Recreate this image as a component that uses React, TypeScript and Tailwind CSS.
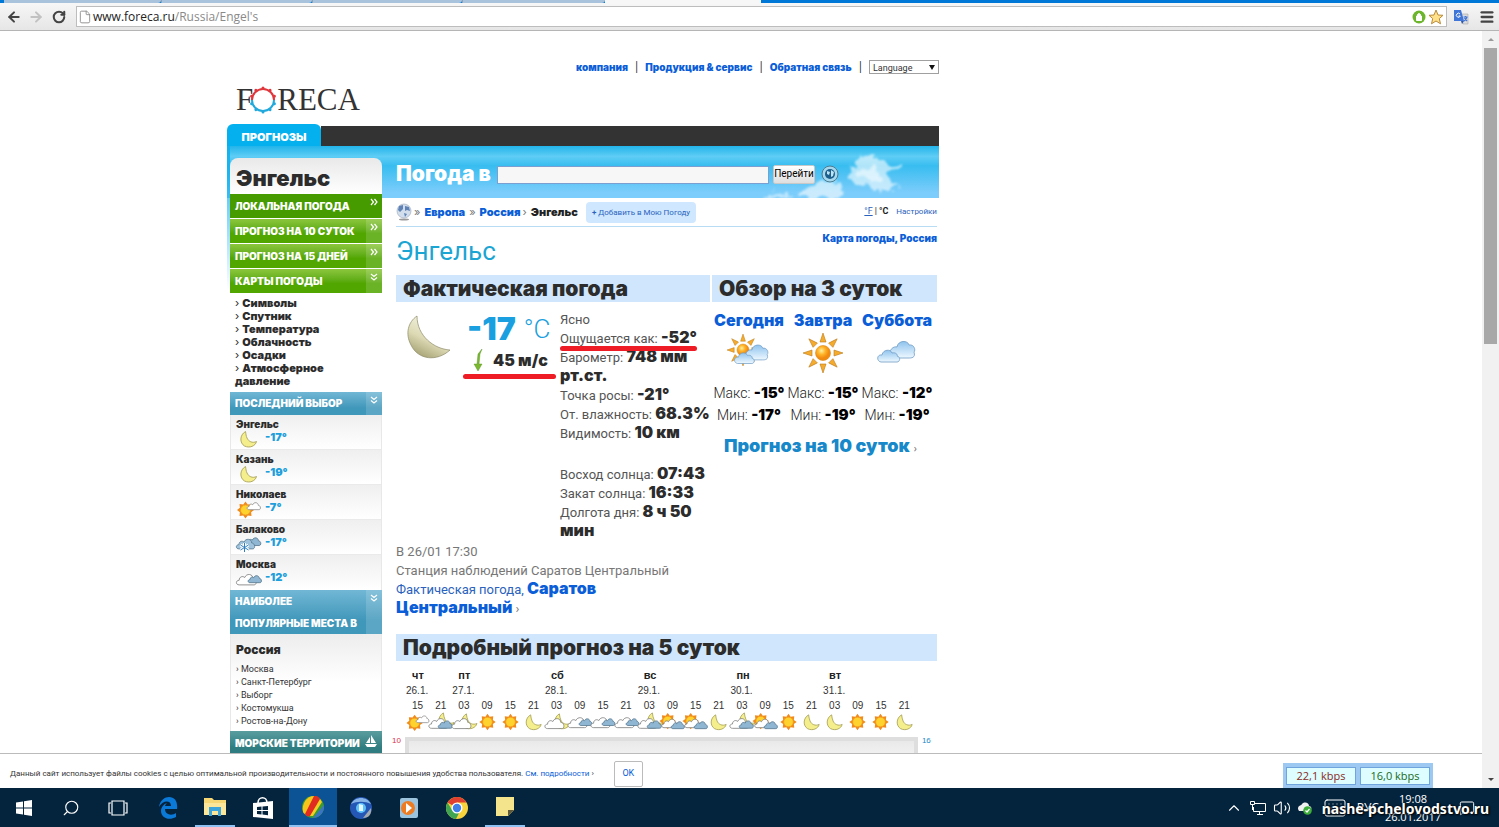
import React, { useState } from "react";
import clsx from "clsx";
import {
  ArrowLeft,
  ArrowRight,
  ChevronUp,
  File,
  Keyboard,
  Menu,
  MessageSquare,
  RotateCw,
  Search,
  Volume2,
} from "lucide-react";

const narrow = "font-['Roboto','Liberation_Sans',sans-serif]";
const heavy = "font-['Inter','Liberation_Sans',sans-serif] font-black";

type Sky =
  | "sun"
  | "moon"
  | "sun-white"
  | "moon-white"
  | "moon-dark"
  | "cloudy"
  | "sun-dark"
  | "snow";

interface WeatherIconProps {
  kind: Sky;
  className?: string;
}

interface CloudProps {
  x: number;
  y: number;
  scale: number;
  fill: string;
  stroke: string;
}

const Cloud: React.FC<CloudProps> = ({ x, y, scale, fill, stroke }) => (
  <path
    d="M4 14C0 14 0 9 4 9C4 5 8 4 10 6C12 1 19 2 19 7C23 7 24 14 20 14Z"
    transform={`translate(${x} ${y}) scale(${scale})`}
    fill={fill}
    stroke={stroke}
    strokeWidth={0.8 / scale}
  />
);

const SmallSun: React.FC<{ x: number; y: number }> = ({ x, y }) => (
  <g transform={`translate(${x} ${y})`}>
    <path
      d="M0 -8.5L2.2 -5.6L6 -6L5.6 -2.2L8.5 0L5.6 2.2L6 6L2.2 5.6L0 8.5L-2.2 5.6L-6 6L-5.6 2.2L-8.5 0L-5.6 -2.2L-6 -6L-2.2 -5.6Z"
      fill="#f08a1c"
    />
    <circle r="5" fill="#ffd22e" stroke="#f0a020" strokeWidth="0.8" />
  </g>
);

const SmallMoon: React.FC<{ x: number; y: number }> = ({ x, y }) => (
  <path
    d="M-3 -7.500C-9 -4 -9 4 -4 7C1 9.500 7 7 8 2.500C4 4.500 0 2.500 -1.500 -1C-2.500 -3 -2.500 -5 -3 -7.500Z"
    transform={`translate(${x} ${y})`}
    fill="#f5ee8c"
    stroke="#a9a35a"
    strokeWidth="0.9"
  />
);

// Petites icônes météo
const WeatherIcon: React.FC<WeatherIconProps> = ({ kind, className }) => (
  <svg viewBox="1 0 24 18" className={clsx("overflow-visible", className)} aria-hidden="true">
    {kind === "sun" && <SmallSun x={13} y={9} />}
    {kind === "moon" && <SmallMoon x={13} y={9} />}
    {kind === "sun-white" && (
      <>
        <SmallSun x={10} y={10} />
        <Cloud x={11} y={1} scale={0.62} fill="#fff" stroke="#8b8b8b" />
      </>
    )}
    {kind === "moon-white" && (
      <>
        <SmallMoon x={19} y={8} />
        <Cloud x={0} y={3} scale={0.92} fill="#fff" stroke="#777" />
      </>
    )}
    {kind === "moon-dark" && (
      <>
        <SmallMoon x={19} y={7} />
        <Cloud x={0} y={3} scale={0.9} fill="#fff" stroke="#777" />
        <Cloud x={10} y={6} scale={0.68} fill="#8fb6d2" stroke="#55768d" />
      </>
    )}
    {kind === "cloudy" && (
      <>
        <Cloud x={0} y={2} scale={0.92} fill="#fff" stroke="#777" />
        <Cloud x={12} y={4} scale={0.62} fill="#8fb6d2" stroke="#55768d" />
      </>
    )}
    {kind === "sun-dark" && (
      <>
        <SmallSun x={8} y={8} />
        <Cloud x={1} y={4} scale={0.78} fill="#fff" stroke="#777" />
        <Cloud x={11} y={7} scale={0.64} fill="#8fb6d2" stroke="#55768d" />
      </>
    )}
    {kind === "snow" && (
      <>
        <Cloud x={10} y={1} scale={0.68} fill="#8fb6d2" stroke="#55768d" />
        <Cloud x={0} y={2} scale={0.85} fill="#9fc3dc" stroke="#55768d" />
        <path d="M9 8V17M5 10L13 15M13 10L5 15" stroke="#fff" strokeWidth="3" />
        <path d="M9 8V17M5 10L13 15M13 10L5 15" stroke="#2f7fc0" strokeWidth="1" />
      </>
    )}
  </svg>
);

const BigSunShape: React.FC = () => (
  <g>
    {[0, 45, 90, 135, 180, 225, 270, 315].map((a) => (
      <path
        key={a}
        d="M-3 -11L0 -20L3 -11Z"
        transform={`rotate(${a})`}
        fill="#f5ab2b"
        stroke="#b9791c"
        strokeWidth="0.6"
      />
    ))}
    <circle r="7.500" fill="url(#sunFill)" stroke="#dd8a12" strokeWidth="0.6" />
  </g>
);

const BigCloudShape: React.FC = () => (
  <g stroke="#6f9cc4" strokeWidth="0.8">
    <path
      d="M14 21C12 12 18 9 21 10C22 3 32 3 33 8C38 7 40 13 38 15C40 21 35 21 33 21Z"
      fill="url(#cloudFill)"
    />
    <path
      d="M5 25C0 24 1 17 6 18C7 12 15 12 16 16C20 15 22 18 21 19C25 20 24 25 21 25Z"
      fill="url(#cloudFill)"
    />
  </g>
);

const Gradients: React.FC = () => (
  <defs>
    <radialGradient id="sunFill" cx="0.4" cy="0.35">
      <stop offset="0" stopColor="#fff0a0" />
      <stop offset="0.5" stopColor="#ffb62b" />
      <stop offset="1" stopColor="#f08a10" />
    </radialGradient>
    <linearGradient id="cloudFill" x1="0" y1="0" x2="0" y2="1">
      <stop offset="0" stopColor="#8fc3ee" />
      <stop offset="1" stopColor="#eef8ff" />
    </linearGradient>
  </defs>
);

const overview = [
  { day: "Сегодня", max: "-15", min: "-17", icon: "mixed" },
  { day: "Завтра", max: "-15", min: "-19", icon: "sun" },
  { day: "Суббота", max: "-12", min: "-19", icon: "cloud" },
];

const greenLinks = [
  { text: "ЛОКАЛЬНАЯ ПОГОДА", active: true, down: false },
  { text: "ПРОГНОЗ НА 10 СУТОК", active: false, down: false },
  { text: "ПРОГНОЗ НА 15 ДНЕЙ", active: false, down: false },
  { text: "КАРТЫ ПОГОДЫ", active: false, down: true },
];

const maps = [
  "Символы",
  "Спутник",
  "Температура",
  "Облачность",
  "Осадки",
  "Атмосферное давление",
];

const recent: { city: string; temp: string; kind: Sky }[] = [
  { city: "Энгельс", temp: "-17°", kind: "moon" },
  { city: "Казань", temp: "-19°", kind: "moon" },
  { city: "Николаев", temp: "-7°", kind: "sun-white" },
  { city: "Балаково", temp: "-17°", kind: "snow" },
  { city: "Москва", temp: "-12°", kind: "cloudy" },
];

const popular = ["Москва", "Санкт-Петербург", "Выборг", "Костомукша", "Ростов-на-Дону"];

const days = [
  { name: "чт", date: "26.1.", span: 2 },
  { name: "пт", date: "27.1.", span: 4 },
  { name: "сб", date: "28.1.", span: 4 },
  { name: "вс", date: "29.1.", span: 4 },
  { name: "пн", date: "30.1.", span: 4 },
  { name: "вт", date: "31.1.", span: 4 },
];

const hours: { h: string; kind: Sky }[] = [
  { h: "15", kind: "sun-white" },
  { h: "21", kind: "moon-dark" },
  { h: "03", kind: "moon-white" },
  { h: "09", kind: "sun" },
  { h: "15", kind: "sun" },
  { h: "21", kind: "moon" },
  { h: "03", kind: "moon-white" },
  { h: "09", kind: "cloudy" },
  { h: "15", kind: "cloudy" },
  { h: "21", kind: "cloudy" },
  { h: "03", kind: "moon-dark" },
  { h: "09", kind: "sun-dark" },
  { h: "15", kind: "sun-dark" },
  { h: "21", kind: "moon" },
  { h: "03", kind: "moon-dark" },
  { h: "09", kind: "sun-dark" },
  { h: "15", kind: "sun" },
  { h: "21", kind: "moon" },
  { h: "03", kind: "moon" },
  { h: "09", kind: "sun" },
  { h: "15", kind: "sun" },
  { h: "21", kind: "moon" },
];

const DoubleArrow: React.FC<{ down?: boolean }> = ({ down }) => (
  <svg viewBox="0 0 8 8" className={clsx("mt-1 h-2 w-2", down && "rotate-90")} aria-hidden="true">
    <path d="M1 1L3.500 4L1 7M4.500 1L7 4L4.500 7" fill="none" stroke="#fff" strokeWidth="1.2" />
  </svg>
);

const BrowserBar: React.FC = () => {
  const [url, setUrl] = useState<string>("www.foreca.ru/Russia/Engel's");

  return (
    <header className="border-b border-[#b5b5b5]">
      <div className="flex h-[3px] bg-[#0078d7]">
        <div className="ml-1 w-[157px] rounded-br-sm bg-[#a9c3dc]" />
        <div className="w-[151px] rounded-br-sm border-l border-[#8aa3bb] bg-[#a9c3dc]" />
        <div className="w-[150px] rounded-br-sm border-l border-[#8aa3bb] bg-[#a9c3dc]" />
        <div className="w-[143px] rounded-br-sm border-l border-[#8aa3bb] bg-[#a9c3dc]" />
        <div className="w-[156px] bg-[#f7f7f7]" />
      </div>
      <div className="flex h-[27px] items-center bg-gradient-to-b from-[#f7f7f7] to-[#e6e6e6]">
        <button aria-label="Назад" className="ml-1.5 text-[#444]">
          <ArrowLeft className="h-4 w-4" strokeWidth={3} />
        </button>
        <button aria-label="Вперёд" className="ml-1.5 text-[#c2c2c2]">
          <ArrowRight className="h-4 w-4" strokeWidth={3} />
        </button>
        <button aria-label="Обновить" className="ml-2 text-[#444]">
          <RotateCw className="h-3.5 w-3.5" strokeWidth={3.5} />
        </button>
        <div className="ml-2.5 flex h-[21px] flex-1 items-center border border-[#bdbdbd] bg-white pl-px">
          <File className="h-3.5 w-3.5 text-[#888]" strokeWidth={1.5} />
          <div className="relative ml-px h-[19px] flex-1">
            <input
              aria-label="Адрес"
              value={url}
              onChange={(e) => setUrl(e.target.value)}
              className="h-[19px] w-full bg-transparent font-['Open_Sans',sans-serif] text-xs text-transparent caret-black outline-none"
            />
            <span className="pointer-events-none absolute inset-0 font-['Open_Sans',sans-serif] text-xs leading-5 text-[#8a8a8a]">
              <span className="text-[#222]">{url.split("/")[0]}</span>
              {url.slice(url.split("/")[0].length)}
            </span>
          </div>
          <svg viewBox="0 0 32 16" className="mr-0.5 h-4 w-8" aria-hidden="true">
            <circle cx="7" cy="8" r="6.500" fill="#6db52c" />
            <path d="M4.500 7H9.500V11.500H4.500ZM5.500 7V5.500Q7 3.500 8.500 5.500V7" fill="#fff" stroke="#fff" />
            <path
              d="M24 1L26 6L31 6.300L27.300 9.600L28.500 14.800L24 12L19.500 14.800L20.700 9.600L17 6.300L22 6Z"
              fill="#ffe18a"
              stroke="#b98a3a"
            />
          </svg>
        </div>
        <svg viewBox="0 0 16 16" className="ml-1.5 h-4 w-4" aria-hidden="true">
          <path d="M8 5H15V15H10Z" fill="#dcdcdc" stroke="#9a9a9a" strokeWidth="0.5" />
          <path d="M1 1H8L11 12H1Z" fill="#3f76d8" />
          <path d="M8 12H11L9 15Z" fill="#2a56ac" />
          <path d="M7 5A2 2 0 1 0 7.300 7H5.500" fill="none" stroke="#fff" strokeWidth="1" />
          <path d="M10.500 8H14.500M12.500 7V8M14 8Q13 11 11 12M11.500 9L14 12" fill="none" stroke="#3f76d8" strokeWidth="1.2" />
        </svg>
        <button aria-label="Меню" className="mr-1 ml-2.5 text-[#444]">
          <Menu className="h-4 w-4" strokeWidth={3.5} />
        </button>
      </div>
    </header>
  );
};

const Logo: React.FC = () => (
  <a
    href="#"
    aria-label="Foreca"
    className="flex items-center font-['Liberation_Serif',serif] text-[31px] leading-7 text-[#333]"
  >
    <span className="-mr-1">F</span>
    <svg viewBox="0 0 28 28" className="h-7 w-7" aria-hidden="true">
      <path d="M3 14A11 11 0 0 1 25 14" fill="none" stroke="#e0373c" strokeWidth="2" />
      <path d="M3 14A11 11 0 0 0 25 14" fill="none" stroke="#21a9dc" strokeWidth="2" />
      {[0, 36, 72, 108, 144, 180, 216, 252, 288, 324].map((a) => (
        <circle
          key={a}
          cx="14"
          cy="2"
          r="1.5"
          transform={`rotate(${a} 14 14)`}
          fill={a > 90 && a < 270 ? "#21a9dc" : "#e0373c"}
        />
      ))}
    </svg>
    <span>RECA</span>
  </a>
);

const Sidebar: React.FC = () => (
  <aside className="relative w-[156px] shrink-0 pt-3 pl-[3px]">
    <div className="absolute top-0 left-0 h-36 w-[3px] bg-gradient-to-b from-[#12b2ee] to-transparent" />
    <div className="relative w-[152px]">
      <h2
        className={`${heavy} h-9 rounded-t-lg bg-gradient-to-b from-[#e9e9e9] to-white pl-1.5 text-[22px] leading-10 text-[#2c2c2c]`}
      >
        Энгельс
      </h2>
      <nav>
        {greenLinks.map((l) => (
          <a
            key={l.text}
            href="#"
            className={clsx(
              `${heavy} mb-px flex h-6 pl-[5px] text-[10px] leading-6 whitespace-nowrap text-white last:mb-0`,
              l.active ? "bg-[#469b00]" : "bg-gradient-to-b from-[#8cc63c] to-[#52a600] to-60%"
            )}
          >
            <span className="flex-1">{l.text}</span>
            <span className={clsx("flex w-4 justify-center", !l.active && "bg-white/15")}>
              <DoubleArrow down={l.down} />
            </span>
          </a>
        ))}
      </nav>
      <ul className={`${heavy} pt-1 pr-6 pb-1 pl-[5px] text-[11px] leading-[13px] text-[#2c2c2c]`}>
        {maps.map((m) => (
          <li key={m}>
            <a href="#">
              <span className="font-normal">› </span>
              {m}
            </a>
          </li>
        ))}
      </ul>
      <h3
        className={`${heavy} flex h-[23px] bg-gradient-to-b from-[#71b7d5] to-[#3f97ba] to-70% pl-[5px] text-[10px] leading-[23px] text-white`}
      >
        <span className="flex-1">ПОСЛЕДНИЙ ВЫБОР</span>
        <span className="flex w-4 justify-center bg-white/15">
          <DoubleArrow down />
        </span>
      </h3>
      <ul className="border-x border-[#e8e8e8]">
        {recent.map((r) => (
          <li
            key={r.city}
            className="h-[35px] border-b border-[#eaeaea] bg-gradient-to-b from-[#efefef] to-white pt-[3px] pl-[5px] last:border-b-0"
          >
            <a href="#" className={`${heavy} block text-[10px] leading-3 text-[#2c2c2c]`}>
              {r.city}
            </a>
            <div className={`${heavy} flex gap-1 text-[11px] leading-[14px] text-[#1d9fdc]`}>
              <WeatherIcon kind={r.kind} className="h-[18px] w-[25px]" />
              {r.temp}
            </div>
          </li>
        ))}
      </ul>
      <h3
        className={`${heavy} flex h-11 bg-gradient-to-b from-[#71b7d5] to-[#3f97ba] to-70% pl-[5px] text-[10px] leading-[22px] text-white`}
      >
        <span className="flex-1 whitespace-nowrap">
          НАИБОЛЕЕ
          <br />
          ПОПУЛЯРНЫЕ МЕСТА В
        </span>
        <span className="flex w-4 justify-center bg-white/15">
          <DoubleArrow down />
        </span>
      </h3>
      <div className="h-[97px] border-x border-[#e8e8e8] bg-gradient-to-b from-[#ededed] to-white to-50% pt-2 pl-[5px]">
        <h4 className={`${heavy} text-xs leading-[15px] text-[#2c2c2c]`}>Россия</h4>
        <ul className={`${narrow} pt-1.5 text-[9px] leading-[13px] text-[#333]`}>
          {popular.map((p) => (
            <li key={p}>
              <a href="#">› {p}</a>
            </li>
          ))}
        </ul>
      </div>
      <h3
        className={`${heavy} flex h-6 items-center justify-between bg-gradient-to-b from-[#5a9d9f] to-[#2f7d80] to-70% px-[5px] text-[10px] whitespace-nowrap text-white`}
      >
        МОРСКИЕ ТЕРРИТОРИИ
        <svg viewBox="0 0 12 12" className="-mt-1 h-3 w-3 shrink-0" aria-hidden="true">
          <path d="M6 0V8H11Z M5 2V8H1Z M0 9H12L10 12H2Z" fill="#fff" />
        </svg>
      </h3>
    </div>
  </aside>
);

const SearchRow: React.FC = () => {
  const [query, setQuery] = useState<string>("");

  return (
    <form className="flex h-[52px] items-center pt-1" onSubmit={(e) => e.preventDefault()}>
      <label htmlFor="place" className={`${heavy} w-[101px] text-[21px] whitespace-nowrap text-white`}>
        Погода в
      </label>
      <input
        id="place"
        value={query}
        onChange={(e) => setQuery(e.target.value)}
        className="mt-0.5 h-[18px] w-[272px] border border-[#7a9fd0] bg-[#f7f7f7] px-1 text-xs outline-none"
      />
      <button
        type="submit"
        className={`${narrow} ml-1 h-[19px] w-[42px] rounded-xs border border-[#c8c8c8] bg-gradient-to-b from-white to-[#dedede] text-[10px] leading-4 text-black`}
      >
        Перейти
      </button>
      <svg viewBox="0 0 18 18" className="ml-1.5 h-[18px] w-[18px]" aria-hidden="true">
        <circle cx="9" cy="9" r="8" fill="#a5d8ee" stroke="#4c7c91" />
        <circle cx="9" cy="9" r="5" fill="#1c5f8c" />
        <path d="M6 6L9 7L8 10L6 9ZM10 5L13 7L12 11L10 12Z" fill="#bfe5f4" />
      </svg>
    </form>
  );
};

const Breadcrumbs: React.FC = () => (
  <div className="flex h-[29px] items-center justify-between border-b border-[#b9dcf5]">
    <div className={`${heavy} flex items-center text-[11px] text-[#0b5ed7]`}>
      <svg viewBox="0 0 16 18" className="mr-0.5 h-[18px] w-4" aria-hidden="true">
        <ellipse cx="8" cy="16.500" rx="5" ry="1" fill="#999" />
        <circle cx="8" cy="8" r="7" fill="#d3deec" stroke="#a3b0c1" strokeWidth="0.7" />
        <path d="M3 3L7 2L7 6L4 9L2 7ZM9 3L13 4L14 8L11 7L9 8ZM8 10L11 11L9 14Z" fill="#5f83b6" />
      </svg>
      <span className="mr-1 font-normal text-[#777]">»</span>
      <a href="#">Европа</a>
      <span className="mx-1 font-normal text-[#777]">»</span>
      <a href="#">Россия</a>
      <span className="mr-1 ml-0.5 font-normal text-[#777]">›</span>
      <span className="text-[#222]">Энгельс</span>
      <a
        href="#"
        className={`${narrow} ml-2 rounded-sm bg-[#cfe8ff] px-1.5 text-[8px] leading-[21px] font-normal whitespace-nowrap text-[#2a62bd]`}
      >
        <b>+</b> Добавить в Мою Погоду
      </a>
    </div>
    <div className={`${narrow} flex items-center text-[8px] whitespace-nowrap text-[#2a62bd]`}>
      <a href="#" className="text-[9px] underline">
        °F
      </a>
      <span className="mx-0.5 text-[9px] text-[#222]">|</span>
      <b className="text-[9px] text-[#222]">°C</b>
      <a href="#" className="ml-2">
        Настройки
      </a>
    </div>
  </div>
);

const Value: React.FC<{ children: React.ReactNode }> = ({ children }) => (
  <b className={`${heavy} text-[16px] leading-none text-[#2c2c2c]`}>{children}</b>
);

const Current: React.FC = () => (
  <div className="w-[314px] shrink-0">
    <h2 className={`${heavy} h-[27px] bg-[#cfe6fd] pl-[7px] text-[21px] leading-[27px] text-[#2c2c2c]`}>
      Фактическая погода
    </h2>
    <div className="flex pt-2">
      <div className="w-[71px] shrink-0 pt-1 pl-2.5">
        <svg viewBox="0 0 46 46" className="h-[46px] w-[46px]" aria-hidden="true">
          <defs>
            <linearGradient id="moonFill" x1="0.8" y1="0" x2="0.3" y2="1">
              <stop offset="0" stopColor="#fdfdf2" />
              <stop offset="0.6" stopColor="#dcd9b4" />
              <stop offset="1" stopColor="#a5a173" />
            </linearGradient>
          </defs>
          <path
            d="M11 2C2 8 -1 20 5 31C12 46 31 48 44 36C28 35 11 22 11 2Z"
            fill="url(#moonFill)"
            stroke="#8d8a68"
            strokeWidth="0.7"
          />
        </svg>
      </div>
      <div className="relative w-[93px] shrink-0">
        <div className="flex items-center gap-2 text-[#1a9fe0]">
          <span className={`${heavy} text-[32px] leading-[38px]`}>-17</span>
          <span className={`${narrow} text-[26px] leading-[38px] font-light`}>°C</span>
        </div>
        <div className={`${heavy} flex items-center gap-2 pl-1.5 text-[16px] leading-6 whitespace-nowrap text-[#2c2c2c]`}>
          <svg viewBox="0 0 12 22" className="h-[22px] w-3" aria-hidden="true">
            <path d="M9 0L5 5L4 15H1L5 22L9 15H6L7 5Z" fill="#7cb82f" stroke="#4f8a1d" strokeWidth="0.4" />
          </svg>
          45 м/с
        </div>
        <div className="absolute top-16 -left-1 h-[5px] w-[93px] rounded-full bg-[#ee1c25]" />
      </div>
      <div className={`${narrow} w-[150px] text-[13px] leading-[19px] text-[#555]`}>
        <p>Ясно</p>
        <p className="relative">
          Ощущается как: <Value>-52°</Value>
          <span className="absolute bottom-[-3px] left-0 h-[5px] w-[137px] rounded-full bg-[#ee1c25]" />
        </p>
        <p>
          Барометр: <Value>748 мм рт.ст.</Value>
        </p>
        <p>
          Точка росы: <Value>-21°</Value>
        </p>
        <p className="whitespace-nowrap">
          От. влажность: <Value>68.3%</Value>
        </p>
        <p className="mb-[22px]">
          Видимость: <Value>10 км</Value>
        </p>
        <p className="whitespace-nowrap">
          Восход солнца: <Value>07:43</Value>
        </p>
        <p>
          Закат солнца: <Value>16:33</Value>
        </p>
        <p>
          Долгота дня: <Value>8 ч 50 мин</Value>
        </p>
      </div>
    </div>
    <div className={`${narrow} mt-px text-[13px] leading-[19px] text-[#777]`}>
      <p>В 26/01 17:30</p>
      <p>Станция наблюдений Саратов Центральный</p>
      <p className="w-60">
        <a href="#" className="text-[#2a62bd]">
          Фактическая погода,{" "}
          <span className={`${heavy} text-[16px] leading-none text-[#0b5ed7]`}>Саратов Центральный</span>
        </a>{" "}
        ›
      </p>
    </div>
  </div>
);

const Overview: React.FC = () => (
  <div className="flex-1">
    <h2 className={`${heavy} h-[27px] bg-[#cfe6fd] pl-[7px] text-[21px] leading-[27px] text-[#2c2c2c]`}>
      Обзор на 3 суток
    </h2>
    <div className="flex pt-1.5">
      {overview.map((o) => (
        <div
          key={o.day}
          className={`${narrow} flex w-[74px] flex-col items-center text-[14px] font-light whitespace-nowrap text-[#222]`}
        >
          <a href="#" className={`${heavy} text-[16px] leading-6 text-[#0b5ed7]`}>
            {o.day}
          </a>
          <svg viewBox="0 0 44 42" className="h-[42px] w-11" aria-hidden="true">
            <Gradients />
            {o.icon === "sun" && (
              <g transform="translate(22 21)">
                <BigSunShape />
              </g>
            )}
            {o.icon === "mixed" && (
              <>
                <g transform="translate(16 18) scale(0.8)">
                  <BigSunShape />
                </g>
                <g transform="translate(6 9) scale(0.9)">
                  <BigCloudShape />
                </g>
              </>
            )}
            {o.icon === "cloud" && (
              <g transform="translate(1 5)">
                <BigCloudShape />
              </g>
            )}
          </svg>
          <p className="mt-2 leading-[22px]">
            Макс: <b className={`${heavy} text-[15px] leading-none text-black`}>{o.max}°</b>
          </p>
          <p className="leading-[22px]">
            Мин: <b className={`${heavy} text-[15px] leading-none text-black`}>{o.min}°</b>
          </p>
        </div>
      ))}
    </div>
    <p className="mt-2 pl-3 leading-6 whitespace-nowrap text-[#777]">
      <a href="#" className={`${heavy} text-[18px] text-[#1788c9]`}>
        Прогноз на 10 суток
      </a>{" "}
      <span className="text-[10px]">›</span>
    </p>
  </div>
);

const Detailed: React.FC = () => (
  <section className="mt-4">
    <h2 className={`${heavy} h-[27px] bg-[#cfe6fd] pl-[7px] text-[21px] leading-[27px] text-[#2c2c2c]`}>
      Подробный прогноз на 5 суток
    </h2>
    <table className="mt-1.5 ml-2.5 w-[510px] table-fixed font-['Liberation_Sans',sans-serif] text-[10px] text-[#333]">
      <thead>
        <tr>
          {days.map((d) => (
            <th key={d.date} colSpan={d.span} className="p-0 pl-1.5 text-left text-[11px] leading-4 text-[#222]">
              {d.name}
            </th>
          ))}
        </tr>
        <tr>
          {days.map((d) => (
            <td key={d.date} colSpan={d.span} className="p-0 leading-4">
              {d.date}
            </td>
          ))}
        </tr>
      </thead>
      <tbody>
        <tr>
          {hours.map((x, i) => (
            <td key={i} className="p-0 text-center leading-[14px]">
              {x.h}
            </td>
          ))}
        </tr>
        <tr>
          {hours.map((x, i) => (
            <td key={i} className="p-0">
              <WeatherIcon kind={x.kind} className="h-[18px] w-[23px]" />
            </td>
          ))}
        </tr>
      </tbody>
    </table>
    <div className="flex items-start gap-1 pt-1.5 font-['Liberation_Sans',sans-serif] text-[8px] leading-2">
      <span className="-ml-1 text-[#d9304c]">10</span>
      <div className="h-20 w-[513px] border-4 border-[#dedede] bg-gradient-to-b from-[#e9e9e9] to-[#f8f6f8] to-30%" />
      <span className="text-[#1d8ac9]">16</span>
    </div>
  </section>
);

const CloudsPhoto: React.FC = () => (
  <svg viewBox="0 0 190 52" className="absolute top-0 right-0 h-[52px] w-[190px]" aria-hidden="true">
    <defs>
      <filter id="soft" x="-10%" y="-20%" width="120%" height="140%">
        <feTurbulence type="fractalNoise" baseFrequency="0.09" numOctaves="3" seed="4" result="noise" />
        <feDisplacementMap in="SourceGraphic" in2="noise" scale="16" xChannelSelector="R" yChannelSelector="G" />
        <feGaussianBlur stdDeviation="1" />
      </filter>
    </defs>
    <g fill="#fff" filter="url(#soft)">
      <path d="M98 32Q100 20 110 20Q108 10 116 8Q124 6 126 14Q134 14 138 22L152 16L146 26L138 28Q140 38 150 42Q130 48 116 38Q106 38 98 32Z" opacity="0.6" />
      <path d="M46 52Q48 44 58 44Q64 36 74 38Q86 30 92 38Q96 46 88 52Z" opacity="0.6" />
      <path d="M12 52Q20 44 34 48L44 52Z" opacity="0.5" />
      <path d="M104 28L126 20L134 34L118 34Z" opacity="0.5" />
    </g>
  </svg>
);

const Taskbar: React.FC = () => (
  <footer className="relative flex h-[39px] shrink-0 items-stretch bg-[#04233d] text-white">
    <button aria-label="Пуск" className="flex w-[47px] items-center justify-center">
      <svg viewBox="0 0 16 16" className="h-4 w-4">
        <path d="M0 2.500L7 1.500V7.500H0ZM8 1.300L16 0V7.500H8ZM0 8.500H7V14.500L0 13.500ZM8 8.500H16V16L8 14.700Z" fill="#fff" />
      </svg>
    </button>
    <button aria-label="Поиск" className="flex w-[47px] items-center justify-center">
      <Search className="h-[18px] w-[18px] -scale-x-100" strokeWidth={1.5} />
    </button>
    <button aria-label="Представление задач" className="flex w-[47px] items-center justify-center">
      <svg viewBox="0 0 20 16" className="h-4 w-5" fill="none" stroke="#fff" strokeWidth="1.2">
        <path d="M4 1H16V15H4ZM3 3H1V13H3M17 3H19V13H17" />
      </svg>
    </button>
    <button aria-label="Edge" className="flex w-12 items-center justify-center">
      <svg viewBox="0 0 20 22" className="ml-1.5 h-[22px] w-5">
        <path
          d="M1 10C2 3 7 0 11 0C17 0 20 5 19 12H7C7 18 14 19 18 16V20C11 24 3 21 3 14C3 10 6 7 9 6C7 8 7 9 7 9H13C13 3 5 3 1 10Z"
          fill="#0a79d8"
        />
      </svg>
    </button>
    <button aria-label="Проводник" className="ml-1.5 flex w-10 items-center justify-center border-b-2 border-[#8fc2f2]">
      <svg viewBox="0 0 22 20" className="h-5 w-[22px]">
        <path d="M0 1H8L10 3H22V18H0Z" fill="#f7d774" />
        <path d="M0 6H22V18H0Z" fill="#fbe69a" />
        <path d="M5 10H17V19H14V14H8V19H5Z" fill="#3da4dc" />
      </svg>
    </button>
    <button aria-label="Магазин" className="ml-1 flex w-12 items-center justify-center">
      <svg viewBox="0 0 22 24" className="h-6 w-[22px]">
        <path d="M6 7C6 0 15 0 15 7" fill="none" stroke="#fff" strokeWidth="1.600" />
        <path d="M1 7L21 5V23L1 21Z" fill="#fff" />
        <path d="M5 11L9.500 10.500V14H5ZM10.500 10.400L16 10V14H10.500ZM5 15H9.500V18.500L5 18ZM10.500 15H16V19.200L10.500 18.600Z" fill="#04233d" />
      </svg>
    </button>
    <button
      aria-label="Браузер"
      className="ml-0.5 flex w-12 items-center justify-center border-b-2 border-[#8fc2f2] bg-[#0b5394]"
    >
      <svg viewBox="0 0 24 24" className="h-6 w-6">
        <circle cx="12" cy="12" r="11" fill="#3a9b35" />
        <path d="M2 17C0 8 7 0 14 1L7 19C5 20 3 19 2 17Z" fill="#f6c61b" />
        <path d="M13 1C18 1 19 3 19 6L9 21C7 22 5 21 4 19Z" fill="#e12c22" />
        <path d="M19 4L21 7L12 21L9 21Z" fill="#f3cf20" />
        <path d="M12 23L23 10C24 17 18 23 12 23Z" fill="#3b74c4" />
      </svg>
    </button>
    <button aria-label="Плеер" className="flex w-12 items-center justify-center">
      <svg viewBox="0 0 24 24" className="h-6 w-6">
        <circle cx="12" cy="12" r="11" fill="#2457b5" />
        <path d="M2 8C6 0 18 0 22 8C16 5 8 5 2 8Z" fill="#86b4e8" />
        <path d="M14 22L22 12C23 18 20 22 14 22Z" fill="#a3a9af" />
        <circle cx="12" cy="12" r="5" fill="#5cc1fa" />
        <path d="M10 8L14 9V15L10 15Z" fill="#e3f5ff" />
      </svg>
    </button>
    <button aria-label="Медиа" className="flex w-12 items-center justify-center">
      <svg viewBox="0 0 20 20" className="h-5 w-5">
        <rect x="1" y="0" width="18" height="20" rx="2" fill="#9cc4df" />
        <circle cx="9" cy="10" r="7" fill="#ee7c22" />
        <path d="M7 5L13 10L7 15Z" fill="#fff" />
      </svg>
    </button>
    <button aria-label="Chrome" className="flex w-12 items-center justify-center">
      <svg viewBox="0 0 24 24" className="h-6 w-6">
        <circle cx="12" cy="12" r="11" fill="#f9d33c" />
        <path d="M12 12L2.500 6.500A11 11 0 0 1 21.500 6.500H12Z" fill="#e0402f" />
        <path d="M2.500 6.500A11 11 0 0 0 11 23L15 15L12 12L7 14Z" fill="#3fa552" />
        <circle cx="12" cy="12" r="5.500" fill="#fff" />
        <circle cx="12" cy="12" r="4.200" fill="#3f7fe8" />
      </svg>
    </button>
    <button aria-label="Заметки" className="ml-1 flex w-10 items-center justify-center border-b-2 border-[#8fc2f2]">
      <svg viewBox="0 0 18 20" className="h-5 w-[18px]">
        <path d="M0 0H18V13L12 19H0Z" fill="#f4e58c" />
        <path d="M18 13H12V19Z" fill="#5f5a39" />
      </svg>
    </button>
    <div className="ml-auto flex items-center gap-1.5 pr-6">
      <ChevronUp className="h-[18px] w-[18px]" strokeWidth={1.5} />
      <svg viewBox="0 0 18 16" className="h-4 w-[18px]" fill="none" stroke="#fff" aria-hidden="true">
        <path d="M5 3.500H16.500V11.500H4.500V7M8 14.500H14M10.500 12V14M1.500 1.500H5.500V4.500H1.500ZM3.500 5V10" />
      </svg>
      <Volume2 className="h-[18px] w-[18px]" strokeWidth={1.5} />
      <svg viewBox="0 0 16 14" className="h-3.5 w-4" aria-hidden="true">
        <path d="M1 8C1 4 4 5 5 3C8 0 12 2 12 5C15 5 15 9 13 10H2Z" fill="#f0f0f0" />
        <circle cx="10.500" cy="9.500" r="4.300" fill="#3eae3a" />
        <path d="M8.500 9.500L10 11L12.500 8" fill="none" stroke="#fff" strokeWidth="1.200" />
      </svg>
      <Keyboard className="mr-1 ml-1 h-6 w-6" strokeWidth={1} />
      <span className="font-['Open_Sans',sans-serif] text-xs">РУС</span>
      <div className="text-center font-['Open_Sans',sans-serif] text-[11px] leading-[18px]">
        <div>19:08</div>
        <div>26.01.2017</div>
      </div>
      <MessageSquare className="ml-3 h-4 w-4" strokeWidth={1.5} />
    </div>
    <span className="absolute top-[11px] right-[10px] font-['Noto_Sans',sans-serif] text-[14px] leading-5 font-bold [text-shadow:0_0_2px_#000,1px_1px_2px_#000]">
      nashe-pchelovodstvo.ru
    </span>
  </footer>
);

const App: React.FC = () => {
  return (
    <div className="flex h-screen flex-col overflow-hidden bg-white">
      <BrowserBar />
      <div className="relative flex min-h-0 flex-1">
        <div className="flex min-w-0 flex-1 flex-col">
          <main className="min-h-0 flex-1 overflow-hidden">
            <div className="mx-auto max-w-[1028px]">
              <div className="w-[712px]">
                <div
                  className={`${heavy} flex items-center justify-end gap-[7px] pt-[29px] text-[10px] leading-[14px] text-[#0b5ed7]`}
                >
                  <a href="#">компания</a>
                  <span className="font-normal text-[#222]">|</span>
                  <a href="#">Продукция &amp; сервис</a>
                  <span className="font-normal text-[#222]">|</span>
                  <a href="#">Обратная связь</a>
                  <span className="font-normal text-[#222]">|</span>
                  <div className="relative">
                    <select
                      aria-label="Language"
                      className={`${narrow} block h-[14px] w-[70px] appearance-none border border-[#a0a0a0] bg-white pl-[3px] text-[9px] font-normal text-[#333]`}
                    >
                      <option>Language</option>
                    </select>
                    <svg viewBox="0 0 6 5" className="pointer-events-none absolute top-[5px] right-1 h-[5px] w-1.5">
                      <path d="M0 0H6L3 5Z" fill="#111" />
                    </svg>
                  </div>
                </div>
                <div className="h-[50px] pt-3 pl-[9px]">
                  <Logo />
                </div>
                <div className="flex h-6 items-end">
                  <a
                    href="#"
                    className={`${heavy} h-6 w-[94px] rounded-t-md bg-[#05b0ee] text-center text-[11px] leading-[27px] text-white`}
                  >
                    ПРОГНОЗЫ
                  </a>
                  <div className="mb-0.5 h-5 flex-1 bg-[#333]" />
                </div>
                <div className="relative -mt-0.5 flex">
                  <div className="absolute inset-x-0 top-0 h-[52px] bg-[linear-gradient(#22b4ea,#5fcdf5_20%,#38bdf0_38%,#7ccdfb_90%)]">
                    <CloudsPhoto />
                  </div>
                  <Sidebar />
                  <div className="relative min-w-0 flex-1 pr-0.5 pl-[13px]">
                    <SearchRow />
                    <Breadcrumbs />
                    <div className="flex h-12 justify-between">
                      <h1 className={`${narrow} text-[26px] leading-12 text-[#1ba5d3]`}>Энгельс</h1>
                      <a href="#" className={`${heavy} pt-1 text-[10px] text-[#0b5ed7]`}>
                        Карта погоды, Россия
                      </a>
                    </div>
                    <div className="flex gap-0.5">
                      <Current />
                      <Overview />
                    </div>
                    <Detailed />
                  </div>
                </div>
              </div>
            </div>
          </main>
          <div
            className={`${narrow} flex h-[35px] shrink-0 items-center border-t border-[#bbb] bg-white pt-1.5 pl-2.5 text-[8px] whitespace-nowrap text-[#333]`}
          >
            <p>
              Данный сайт использует файлы cookies с целью оптимальной производительности и постоянного повышения
              удобства пользователя.{" "}
              <a href="#" className="text-[#0b5ed7]">
                См. подробности
              </a>{" "}
              ›
            </p>
            <button className="ml-5 h-[26px] w-[29px] rounded-xs border border-[#bbb] text-[9px] text-[#0b5ed7]">
              OK
            </button>
          </div>
        </div>
        <div className="flex w-[17px] shrink-0 flex-col items-center bg-[#f1f1f1]">
          <svg viewBox="0 0 8 17" className="h-[17px] w-2" aria-hidden="true">
            <path d="M1 10L4 7L7 10Z" fill="#999" />
          </svg>
          <div className="h-[296px] w-[13px] bg-[#a8a8a8]" />
          <svg viewBox="0 0 8 17" className="mt-auto h-[17px] w-2" aria-hidden="true">
            <path d="M1 7L4 10L7 7Z" fill="#444" />
          </svg>
        </div>
        {/* Débit réseau */}
        <div className="absolute right-[66px] bottom-0 flex gap-1 bg-[#9cc8f2] px-[3px] pt-1 pb-[3px] font-['Open_Sans',sans-serif] text-[11px] leading-4">
          <span className="w-[70px] border border-[#6fa5dc] bg-[#ddfdff] text-center text-[#8a2a1c]">22,1 kbps</span>
          <span className="w-[70px] border border-[#6fa5dc] bg-[#ddfdff] text-center text-[#1a6a1a]">16,0 kbps</span>
        </div>
      </div>
      <Taskbar />
    </div>
  );
};

export default App;
